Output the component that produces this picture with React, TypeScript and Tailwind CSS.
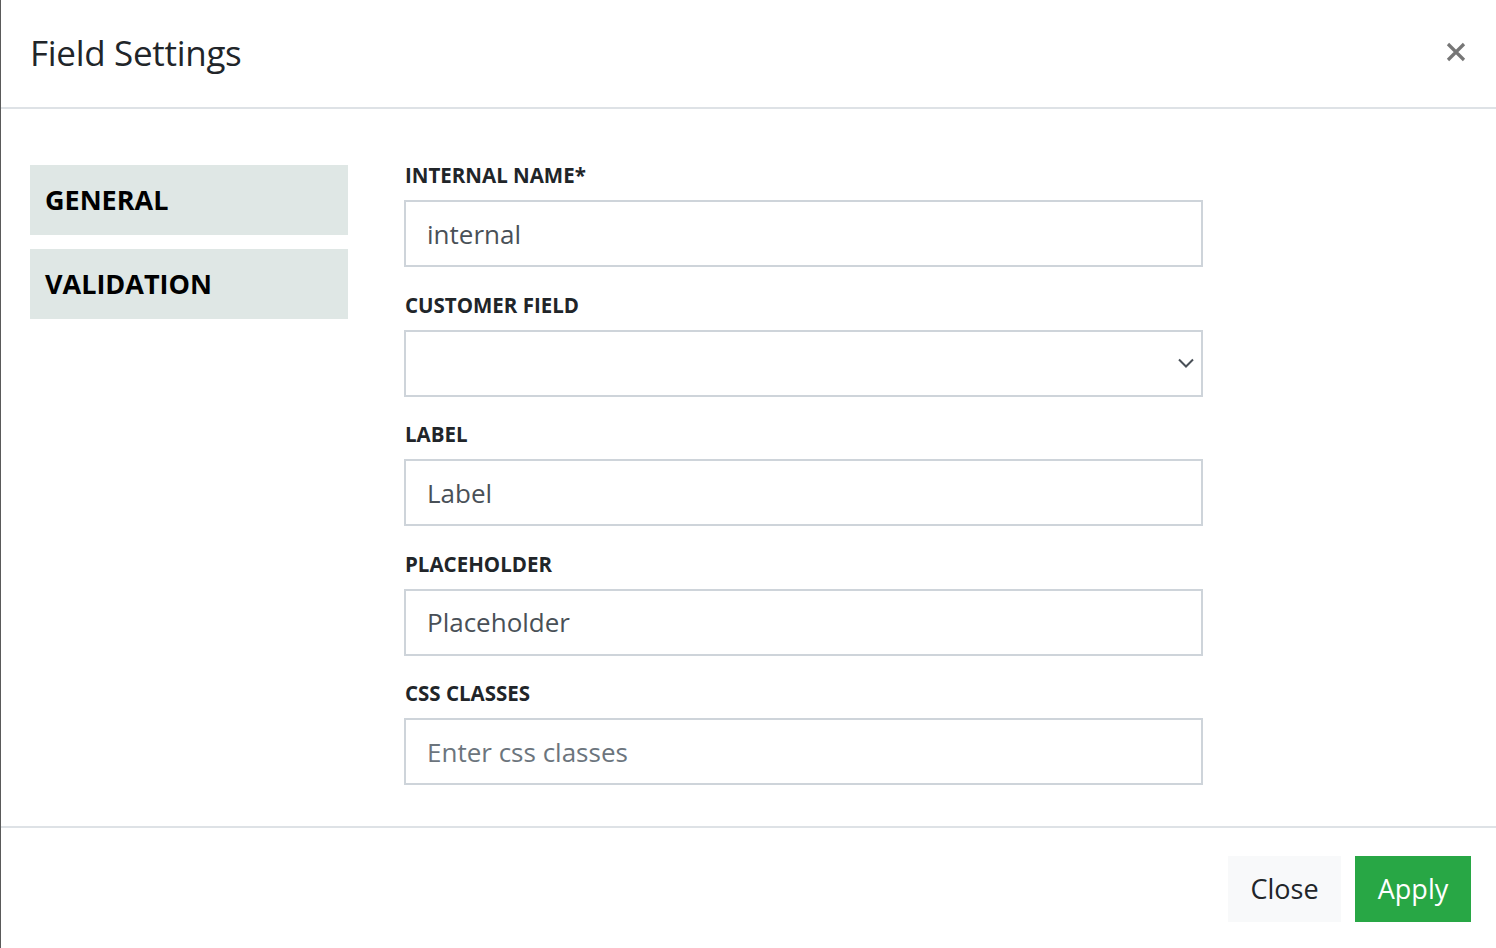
import { useState } from "react"

const fields = [
  { label: "INTERNAL NAME*", value: "internal", placeholder: "" },
  { label: "CUSTOMER FIELD", select: true },
  { label: "LABEL", value: "Label", placeholder: "" },
  { label: "PLACEHOLDER", value: "Placeholder", placeholder: "" },
  { label: "CSS CLASSES", value: "", placeholder: "Enter css classes" },
]

export default function App() {
  const [tab, setTab] = useState("general")

  return (
    <div
      className="h-[948px] w-[1496px] overflow-hidden bg-white text-[#212529] border-l border-[#5a5a5a] flex flex-col"
      style={{ fontFamily: '"Open Sans", "Noto Sans", sans-serif' }}
    >
      {/* Header */}
      <div className="h-[109px] shrink-0 flex items-center justify-between pl-[29px] pr-[30px] border-b-2 border-[#dee2e6]">
        <h1 className="text-[35px] leading-none tracking-[-0.3px] pb-[2px]">Field Settings</h1>
        <button className="text-[#767676] pb-[4px]" aria-label="Close">
          <svg width="20" height="20" viewBox="0 0 20 20">
            <path d="M2 2 L18 18 M18 2 L2 18" stroke="currentColor" strokeWidth="3.2" />
          </svg>
        </button>
      </div>

      {/* Body */}
      <div className="flex-1 flex pl-[29px] pt-[56px] gap-[56px]">
        <div className="w-[318px] flex flex-col gap-[14px]">
          <button
            onClick={() => setTab("general")}
            className="h-[70px] bg-[#dfe7e5] text-left pl-[15px] text-[27px] font-bold text-black"
          >
            GENERAL
          </button>
          <button
            onClick={() => setTab("validation")}
            className="h-[70px] bg-[#dfe7e5] text-left pl-[15px] text-[27px] font-bold text-black"
          >
            VALIDATION
          </button>
        </div>

        <div className="w-[799px] flex flex-col -mt-[3px]">
          {tab === "general" &&
            fields.map((f) => (
              <div key={f.label} className="flex flex-col h-[129.5px]">
                <label className="text-[20.5px] font-bold leading-[26px] h-[38px] pl-[1px]">
                  {f.label}
                </label>
                {f.select ? (
                  <div className="h-[67px] border-2 border-[#ced4da] flex items-center justify-end pr-[6px]">
                    <svg width="18" height="12" viewBox="0 0 18 12" className="text-[#495057]">
                      <path d="M2 2.5 L9 9.5 L16 2.5" stroke="currentColor" strokeWidth="2" fill="none" />
                    </svg>
                  </div>
                ) : (
                  <input
                    defaultValue={f.value}
                    placeholder={f.placeholder}
                    className="h-[67px] border-2 border-[#ced4da] px-[21px] text-[26px] text-[#495057] placeholder:text-[#6c757d] outline-none"
                  />
                )}
              </div>
            ))}
        </div>
      </div>

      {/* Footer */}
      <div className="h-[122px] shrink-0 border-t-2 border-[#dee2e6] flex justify-end items-start pt-[28px] pr-[25px] gap-[14px]">
        <button className="h-[66px] w-[113px] bg-[#f8f9fa] text-[27px] text-[#212529]">Close</button>
        <button className="h-[66px] w-[116px] bg-[#28a745] text-[27px] text-white">Apply</button>
      </div>
    </div>
  )
}
